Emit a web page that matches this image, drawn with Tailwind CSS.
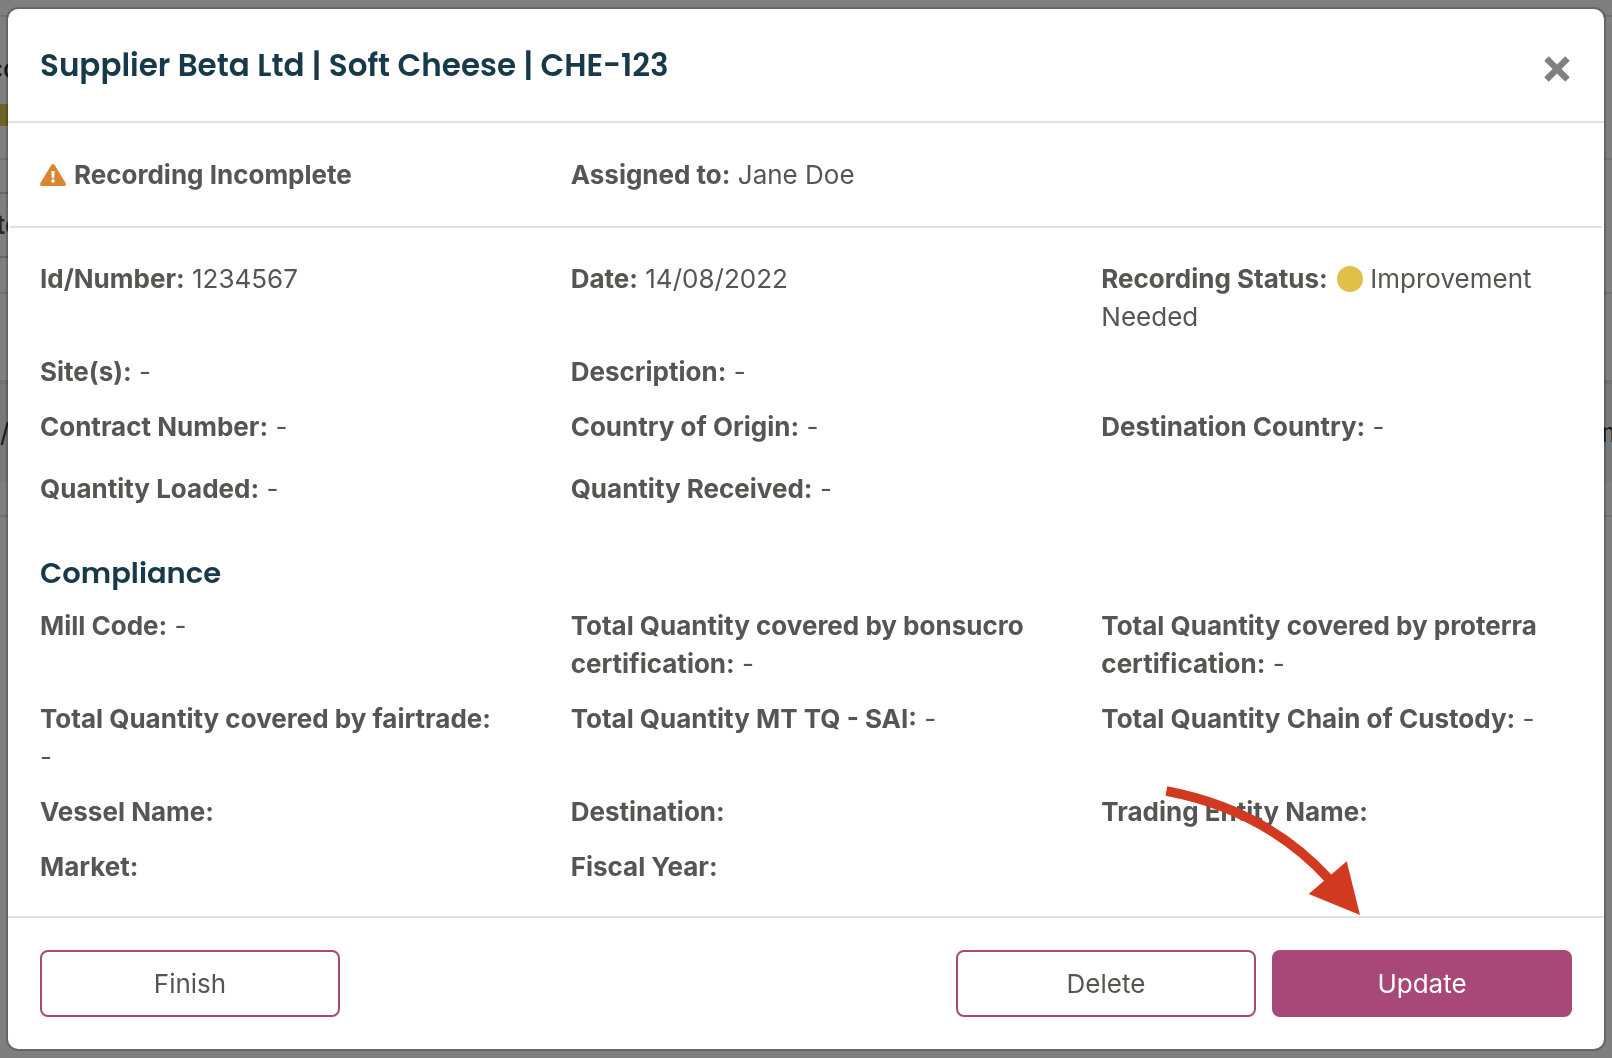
<!DOCTYPE html>
<html lang="en">
<head>
  <meta charset="UTF-8" />
  <meta name="viewport" content="width=device-width, initial-scale=1.0" />
  <title>Supplier Beta Ltd | Soft Cheese | CHE-123</title>
  <script src="https://cdn.jsdelivr.net/npm/@tailwindcss/browser@4"></script>
</head>
<body class="min-h-screen overflow-hidden bg-white font-['Inter',sans-serif] text-[26px] leading-[38px] text-[#555553]">

  <!-- Page behind the modal -->
  <div class="flex flex-col overflow-hidden text-[#333333]" aria-hidden="true">
    <div class="h-[15px]"></div>
    <div class="flex h-[89px] items-center border-t-2 border-[#dee2e6] pt-4">
      <span class="-ml-3 font-medium">co</span>
    </div>
    <div class="h-[22px] w-1/2 bg-[#e0c34a]"></div>
    <div class="h-8"></div>
    <div class="h-[34px] border-t-2 border-[#dee2e6]"></div>
    <div class="flex h-16 w-1/2 items-center border-t-2 border-[#c8ccd4]">
      <span class="-ml-1 font-semibold text-[#495057]">te</span>
    </div>
    <div class="h-9 w-1/2 border-t-2 border-[#c8ccd4]"></div>
    <div class="h-[88px] border-t-2 border-[#dee2e6]"></div>
    <div class="flex h-[102px] items-center justify-between border-t-4 border-[#dee2e6] bg-[#f1f3f5]">
      <span>/</span>
      <span class="-mr-3">m</span>
    </div>
    <div class="h-[33px]"></div>
    <div class="border-t-2 border-[#dee2e6]"></div>
  </div>

  <!-- Modal -->
  <div class="fixed inset-0 bg-black/50 px-[6px] pt-[7px]">
    <div role="dialog" aria-labelledby="modal-title" class="rounded-xl border-2 border-black/20 bg-white bg-clip-padding">

      <header class="flex items-start justify-between border-b-2 border-[#dee2e6] p-8">
        <h1 id="modal-title" class="font-['Poppins','Inter',sans-serif] text-[31px] leading-[48px] font-semibold text-[#17394a]">Supplier Beta Ltd | Soft Cheese | CHE-123</h1>
        <button type="button" aria-label="Close" class="px-0.5 pt-[15px]">
          <svg class="size-[26px]" viewBox="0 0 26 26" fill="none" stroke="#808080" stroke-width="6.400">
            <path d="M2.500 2.500 23.500 23.500M23.500 2.500 2.500 23.500" />
          </svg>
        </button>
      </header>

      <section class="mx-[2px] grid grid-cols-3 border-b-2 border-[#dee2e6] pt-[33px] pb-8">
        <p class="flex items-center gap-2 px-[30px] font-bold">
          <svg class="h-[22px] w-[26px]" viewBox="0 0 26 22">
            <path d="M11.300 1Q13-1 14.700 1L25.600 19Q26.500 22 24 22H2Q-.5 22 .4 19Z" fill="#d98634" />
            <path d="M11.400 7h3.200l-.4 7.200h-2.400z" fill="#fff" />
            <circle cx="13" cy="17" r="1.800" fill="#fff" />
          </svg>
          Recording Incomplete
        </p>
        <p class="px-[30px]"><b>Assigned to:</b> Jane Doe</p>
      </section>

      <section class="mx-[2px] pt-8 pb-[30px]">
        <div class="grid grid-cols-3 gap-y-[17px]">
          <p class="px-[30px]"><b>Id/Number:</b> 1234567</p>
          <p class="px-[30px]"><b>Date:</b> 14/08/2022</p>
          <p class="px-[30px]"><b>Recording Status:</b> <span class="ml-0.5 inline-block size-[26px] rounded-full bg-[#dfc14a] align-[-4px]"></span> Improvement Needed</p>
          <p class="px-[30px]"><b>Site(s):</b> -</p>
          <p class="col-span-2 px-[30px]"><b>Description:</b> -</p>
          <p class="px-[30px]"><b>Contract Number:</b> -</p>
          <p class="px-[30px]"><b>Country of Origin:</b> -</p>
          <p class="px-[30px]"><b>Destination Country:</b> -</p>
        </div>
        <div class="mt-6 grid grid-cols-3">
          <p class="px-[30px]"><b>Quantity Loaded:</b> -</p>
          <p class="px-[30px]"><b>Quantity Received:</b> -</p>
        </div>

        <h2 class="mt-[46px] mb-[15px] px-[30px] font-['Poppins','Inter',sans-serif] text-[29px] leading-[38px] font-semibold text-[#17394a]">Compliance</h2>
        <div class="grid grid-cols-3 gap-y-[17px]">
          <p class="px-[30px]"><b>Mill Code:</b> -</p>
          <p class="px-[30px]"><b>Total Quantity covered by bonsucro certification:</b> -</p>
          <p class="px-[30px]"><b>Total Quantity covered by proterra certification:</b> -</p>
          <p class="px-[30px]"><b>Total Quantity covered by fairtrade:</b><br />-</p>
          <p class="px-[30px]"><b>Total Quantity MT TQ - SAI:</b> -</p>
          <p class="px-[30px]"><b>Total Quantity Chain of Custody:</b> -</p>
          <p class="px-[30px]"><b>Vessel Name:</b></p>
          <p class="px-[30px]"><b>Destination:</b></p>
          <p class="px-[30px]"><b>Trading Entity Name:</b></p>
          <p class="px-[30px]"><b>Market:</b></p>
          <p class="px-[30px]"><b>Fiscal Year:</b></p>
        </div>
      </section>

      <footer class="relative flex gap-4 border-t-2 border-[#dee2e6] p-8">
        <button type="button" class="mr-auto h-[67px] w-[300px] rounded-lg border-2 border-[#a84878]">Finish</button>
        <button type="button" class="h-[67px] w-[300px] rounded-lg border-2 border-[#a84878]">Delete</button>
        <button type="button" class="h-[67px] w-[300px] rounded-lg bg-[#a84878] text-white">Update</button>

        <!-- Arrow pointing at Update -->
        <svg class="pointer-events-none absolute right-60 bottom-full h-[134px] w-[200px]" viewBox="0 0 200 134" aria-hidden="true">
          <path d="M2.400 7Q102 26 165 95" fill="none" stroke="#d13a20" stroke-width="9.600" />
          <path d="M182.700 77.300 196 131 144.700 110Z" fill="#d13a20" />
        </svg>
      </footer>
    </div>
  </div>
</body>
</html>
